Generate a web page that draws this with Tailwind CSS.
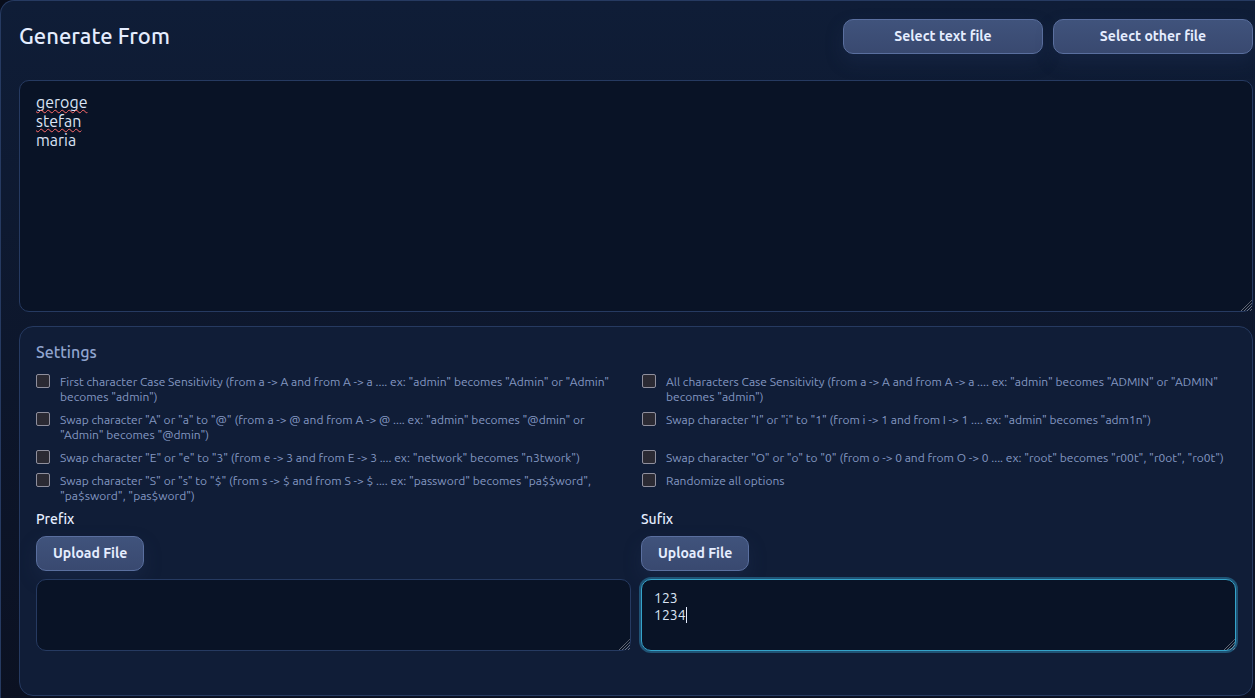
<!DOCTYPE html>
<html lang="en">
<head>
  <meta charset="utf-8">
  <meta name="viewport" content="width=device-width, initial-scale=1">
  <title>Generate From</title>
  <script src="https://cdn.jsdelivr.net/npm/@tailwindcss/browser@4"></script>
</head>
<body class="min-h-screen flex flex-col overflow-hidden bg-[#080d1b] font-[Ubuntu,'Noto_Sans',sans-serif] text-[#e5edff] scheme-dark">
  <svg class="hidden" aria-hidden="true">
    <symbol id="grip" viewBox="0 0 12 12">
      <path d="M1 12L12 1M4 12L12 4M7 12L12 7M10 12L12 10" fill="none" stroke="#8b8f98" stroke-width="1" stroke-dasharray="1 .5"/>
    </symbol>
  </svg>
  <main class="grow flex flex-col rounded-tl-[14px] border-t border-l border-[#263a61] bg-linear-to-b from-[#0f1d37] to-[#0b1122] pt-[18px] pl-[18px] pr-[2px] pb-[2px]">
    <!-- title bar -->
    <header class="flex items-start justify-between h-[61px]">
      <h1 class="text-[22px] leading-[34px] font-[550]">Generate From</h1>
      <div class="flex gap-[10px]">
        <button type="button" class="w-[200px] h-[35px] rounded-[10px] border border-[#5a6f9f] bg-linear-to-b from-[#40537c] to-[#394970] text-[14px] font-semibold shadow-[0_8px_18px_rgba(36,54,94,0.3)]">Select text file</button>
        <button type="button" class="w-[200px] h-[35px] rounded-[10px] border border-[#5a6f9f] bg-linear-to-b from-[#40537c] to-[#394970] text-[14px] font-semibold shadow-[0_8px_18px_rgba(36,54,94,0.3)]">Select other file</button>
      </div>
    </header>

    <div class="relative flex">
      <textarea aria-label="Words" spellcheck="false" class="w-full h-[232px] rounded-[10px] border border-[#263a61] bg-[#091326] px-4 py-3 text-[16px] leading-[19px] text-[#dbe4f5] resize outline-none [&::-webkit-resizer]:hidden">geroge
stefan
maria</textarea>
      <!-- spelling marks -->
      <div aria-hidden="true" class="absolute inset-0 pointer-events-none border border-transparent px-4 py-3 text-[16px] leading-[19px] text-transparent">
        <div><span class="underline decoration-wavy decoration-1 decoration-[#ff6b6b] underline-offset-1 [text-decoration-skip-ink:none]">geroge</span></div>
        <div><span class="underline decoration-wavy decoration-1 decoration-[#ff6b6b] underline-offset-1 [text-decoration-skip-ink:none]">stefan</span></div>
      </div>
      <svg class="absolute right-px bottom-px size-3 pointer-events-none" aria-hidden="true"><use href="#grip"/></svg>
    </div>

    <!-- settings -->
    <section class="mt-[14px] grow rounded-[14px] border border-[#263a61] bg-[#101d37] px-4 pt-[14px] pb-11">
      <h2 class="text-[16px] leading-[22px] font-[550] text-[#91a5cf]">Settings</h2>
      <div class="mt-[11px] grid grid-cols-2 gap-x-3 gap-y-2 text-[12px] leading-[15px] text-[#8498c2]">
        <label class="flex items-start gap-[10px]">
          <input type="checkbox" class="appearance-none shrink-0 size-[14px] rounded-[2px] border border-[#8f8f9d] bg-[#2b2a33]">
          <span>First character Case Sensitivity (from a -&gt; A and from A -&gt; a .... ex: "admin" becomes "Admin" or "Admin" becomes "admin")</span>
        </label>
        <label class="flex items-start gap-[10px]">
          <input type="checkbox" class="appearance-none shrink-0 size-[14px] rounded-[2px] border border-[#8f8f9d] bg-[#2b2a33]">
          <span>All characters Case Sensitivity (from a -&gt; A and from A -&gt; a .... ex: "admin" becomes "ADMIN" or "ADMIN" becomes "admin")</span>
        </label>
        <label class="flex items-start gap-[10px]">
          <input type="checkbox" class="appearance-none shrink-0 size-[14px] rounded-[2px] border border-[#8f8f9d] bg-[#2b2a33]">
          <span>Swap character "A" or "a" to "@" (from a -&gt; @ and from A -&gt; @ .... ex: "admin" becomes "@dmin" or "Admin" becomes "@dmin")</span>
        </label>
        <label class="flex items-start gap-[10px]">
          <input type="checkbox" class="appearance-none shrink-0 size-[14px] rounded-[2px] border border-[#8f8f9d] bg-[#2b2a33]">
          <span>Swap character "I" or "i" to "1" (from i -&gt; 1 and from I -&gt; 1 .... ex: "admin" becomes "adm1n")</span>
        </label>
        <label class="flex items-start gap-[10px]">
          <input type="checkbox" class="appearance-none shrink-0 size-[14px] rounded-[2px] border border-[#8f8f9d] bg-[#2b2a33]">
          <span>Swap character "E" or "e" to "3" (from e -&gt; 3 and from E -&gt; 3 .... ex: "network" becomes "n3twork")</span>
        </label>
        <label class="flex items-start gap-[10px]">
          <input type="checkbox" class="appearance-none shrink-0 size-[14px] rounded-[2px] border border-[#8f8f9d] bg-[#2b2a33]">
          <span>Swap character "O" or "o" to "0" (from o -&gt; 0 and from O -&gt; 0 .... ex: "root" becomes "r00t", "r0ot", "ro0t")</span>
        </label>
        <label class="flex items-start gap-[10px]">
          <input type="checkbox" class="appearance-none shrink-0 size-[14px] rounded-[2px] border border-[#8f8f9d] bg-[#2b2a33]">
          <span>Swap character "S" or "s" to "$" (from s -&gt; $ and from S -&gt; $ .... ex: "password" becomes "pa$$word", "pa$sword", "pas$word")</span>
        </label>
        <label class="flex items-start gap-[10px]">
          <input type="checkbox" class="appearance-none shrink-0 size-[14px] rounded-[2px] border border-[#8f8f9d] bg-[#2b2a33]">
          <span>Randomize all options</span>
        </label>
      </div>

      <!-- prefix / sufix -->
      <div class="mt-[7px] grid grid-cols-2 gap-[10px]">
        <div class="flex flex-col items-start">
          <label for="prefix" class="text-[14px] leading-[18px] font-[550]">Prefix</label>
          <button type="button" class="mt-2 h-[35px] px-4 rounded-[10px] border border-[#5a6f9f] bg-linear-to-b from-[#40537c] to-[#394970] text-[14px] font-semibold shadow-[0_8px_18px_rgba(36,54,94,0.3)]">Upload File</button>
          <div class="relative mt-2 w-full flex">
            <textarea id="prefix" class="w-full h-[72px] rounded-[10px] border border-[#263a61] bg-[#091326] px-3 py-[10px] text-[14px] leading-[17px] text-[#dbe4f5] resize outline-none [&::-webkit-resizer]:hidden"></textarea>
            <svg class="absolute right-px bottom-px size-3 pointer-events-none" aria-hidden="true"><use href="#grip"/></svg>
          </div>
        </div>
        <div class="flex flex-col items-start">
          <label for="sufix" class="text-[14px] leading-[18px] font-[550]">Sufix</label>
          <button type="button" class="mt-2 h-[35px] px-4 rounded-[10px] border border-[#5a6f9f] bg-linear-to-b from-[#40537c] to-[#394970] text-[14px] font-semibold shadow-[0_8px_18px_rgba(36,54,94,0.3)]">Upload File</button>
          <div class="relative mt-2 w-full flex">
            <textarea id="sufix" class="w-full h-[72px] rounded-[10px] border border-[#35a3c9] bg-[#091326] px-3 py-[10px] text-[14px] leading-[17px] text-[#dbe4f5] resize outline-none ring-2 ring-[#1f5375] [&::-webkit-resizer]:hidden">123
1234</textarea>
            <!-- caret -->
            <div aria-hidden="true" class="absolute inset-0 pointer-events-none border border-transparent px-3 py-[10px] text-[14px] leading-[17px] text-transparent">
              <div>123</div>
              <div><span class="border-r border-[#e5edff]">1234</span></div>
            </div>
            <svg class="absolute right-px bottom-px size-3 pointer-events-none" aria-hidden="true"><use href="#grip"/></svg>
          </div>
        </div>
      </div>
    </section>
  </main>
</body>
</html>
